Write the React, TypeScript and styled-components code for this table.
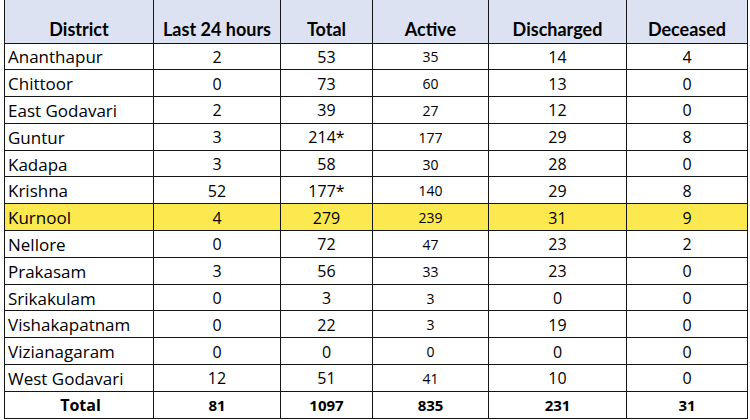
import React from 'react';
import styled, { createGlobalStyle } from 'styled-components';

const GlobalStyle = createGlobalStyle`
  html, body {
    margin: 0;
    padding: 0;
    background: #ffffff;
  }
`;

const Page = styled.div`
  width: 750px;
  height: 420px;
  padding: 0 3px 0 4px;
  box-sizing: border-box;
  background: #ffffff;
  font-family: 'Open Sans', 'Noto Sans', sans-serif;
  color: #000000;
`;

const Table = styled.table`
  width: 743px;
  border-collapse: collapse;
  table-layout: fixed;
`;

const HeadCell = styled.th<{ $w: number }>`
  width: ${(p) => p.$w}px;
  height: 43px;
  padding: 15px 0 0;
  box-sizing: border-box;
  background: #dde2f2;
  border: 1px solid #151515;
  border-top: none;
  font-family: Lato, 'Open Sans', sans-serif;
  font-size: 18px;
  font-weight: 700;
  text-align: center;
  vertical-align: middle;
`;

const Row = styled.tr<{ $highlight?: boolean }>`
  height: 26.8px;
  background: ${(p) => (p.$highlight ? '#fbe94f' : '#ffffff')};
`;

const NameCell = styled.td<{ $bold?: boolean }>`
  padding: 1px 0 0 3px;
  border: 1px solid #151515;
  font-size: ${(p) => (p.$bold ? 16 : 17)}px;
  font-weight: ${(p) => (p.$bold ? 700 : 400)};
  text-align: ${(p) => (p.$bold ? 'center' : 'left')};
  white-space: nowrap;
`;

const NumCell = styled.td<{ $bold?: boolean; $small?: boolean }>`
  padding: 1px 0 0;
  border: 1px solid #151515;
  font-size: ${(p) => (p.$bold ? 15 : p.$small ? 14 : 16)}px;
  font-weight: ${(p) => (p.$bold ? 700 : 400)};
  text-align: center;
`;

const columns = [
  { label: 'District', w: 149 },
  { label: 'Last 24 hours', w: 127 },
  { label: 'Total', w: 92 },
  { label: 'Active', w: 116 },
  { label: 'Discharged', w: 138 },
  { label: 'Deceased', w: 121 },
];

type District = [string, number, string, number, number, number];

const districts: District[] = [
  ['Ananthapur', 2, '53', 35, 14, 4],
  ['Chittoor', 0, '73', 60, 13, 0],
  ['East Godavari', 2, '39', 27, 12, 0],
  ['Guntur', 3, '214*', 177, 29, 8],
  ['Kadapa', 3, '58', 30, 28, 0],
  ['Krishna', 52, '177*', 140, 29, 8],
  ['Kurnool', 4, '279', 239, 31, 9],
  ['Nellore', 0, '72', 47, 23, 2],
  ['Prakasam', 3, '56', 33, 23, 0],
  ['Srikakulam', 0, '3', 3, 0, 0],
  ['Vishakapatnam', 0, '22', 3, 19, 0],
  ['Vizianagaram', 0, '0', 0, 0, 0],
  ['West Godavari', 12, '51', 41, 10, 0],
];

const totals = [81, 1097, 835, 231, 31];

export default function App() {
  return (
    <Page>
      <GlobalStyle />
      <Table>
        <thead>
          <tr>
            {columns.map((c) => (
              <HeadCell key={c.label} $w={c.w}>
                {c.label}
              </HeadCell>
            ))}
          </tr>
        </thead>
        <tbody>
          {districts.map(([name, last, total, active, discharged, deceased]) => (
            <Row key={name} $highlight={name === 'Kurnool'}>
              <NameCell>{name}</NameCell>
              <NumCell>{last}</NumCell>
              <NumCell>{total}</NumCell>
              <NumCell $small>{active}</NumCell>
              <NumCell>{discharged}</NumCell>
              <NumCell>{deceased}</NumCell>
            </Row>
          ))}
          <Row>
            <NameCell $bold>Total</NameCell>
            {totals.map((t, i) => (
              <NumCell key={i} $bold>
                {t}
              </NumCell>
            ))}
          </Row>
        </tbody>
      </Table>
    </Page>
  );
}
